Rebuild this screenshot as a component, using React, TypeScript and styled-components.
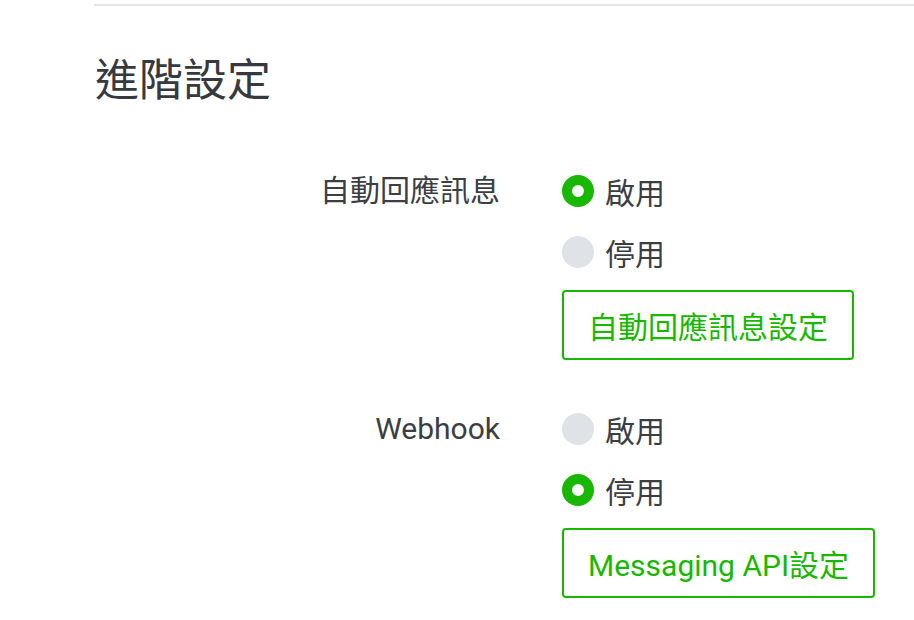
import React from "react";
import styled, { createGlobalStyle } from "styled-components";

const Global = createGlobalStyle`
  html, body { margin: 0; padding: 0; background: #fff; }
  body {
    font-family: Roboto, "Noto Sans CJK TC", "Noto Sans", sans-serif;
    color: #3b3e43;
  }
`;

const Page = styled.div`
  padding: 4px 0 0 94px;
`;

const Divider = styled.div`
  height: 2px;
  background: #e6e6e6;
`;

const Title = styled.h1`
  margin: 45px 0 0 1px;
  font-size: 44px;
  line-height: 60px;
  font-weight: 400;
  color: #36393e;
`;

const Form = styled.div`
  margin-top: 60px;
  display: flex;
  flex-direction: column;
  gap: 49px;
`;

const Row = styled.div`
  display: grid;
  grid-template-columns: 406px auto;
  column-gap: 62px;
  align-items: start;
`;

const Label = styled.div`
  text-align: right;
  font-size: 30px;
  line-height: 40px;
  white-space: nowrap;
`;

const Options = styled.div`
  display: flex;
  flex-direction: column;
  align-items: flex-start;
  gap: 21px;
`;

const Option = styled.label`
  display: flex;
  align-items: center;
  height: 40px;
  gap: 11px;
  font-size: 30px;
  cursor: pointer;
`;

const Dot = styled.span<{ $on: boolean }>`
  box-sizing: border-box;
  width: 32px;
  height: 32px;
  border-radius: 50%;
  background: ${(p) => (p.$on ? "#fff" : "#dfe2e7")};
  border: ${(p) => (p.$on ? "10px solid #19b800" : "none")};
`;

const Button = styled.button`
  box-sizing: border-box;
  margin-top: -3px;
  height: 70px;
  padding: 0 24px;
  border: 2px solid #19b800;
  border-radius: 4px;
  background: #fff;
  color: #19b800;
  font-family: Roboto, "Noto Sans CJK TC", sans-serif;
  font-size: 30px;
  cursor: pointer;
`;

type Setting = { label: string; enabled: boolean; button: string };

const settings: Setting[] = [
  { label: "自動回應訊息", enabled: true, button: "自動回應訊息設定" },
  { label: "Webhook", enabled: false, button: "Messaging API設定" },
];

export default function App() {
  return (
    <>
      <Global />
      <Page>
        <Divider />
        <Title>進階設定</Title>
        <Form>
          {settings.map((s) => (
            <Row key={s.label}>
              <Label>{s.label}</Label>
              <Options>
                <Option>
                  <Dot $on={s.enabled} />
                  啟用
                </Option>
                <Option>
                  <Dot $on={!s.enabled} />
                  停用
                </Option>
                <Button>{s.button}</Button>
              </Options>
            </Row>
          ))}
        </Form>
      </Page>
    </>
  );
}
